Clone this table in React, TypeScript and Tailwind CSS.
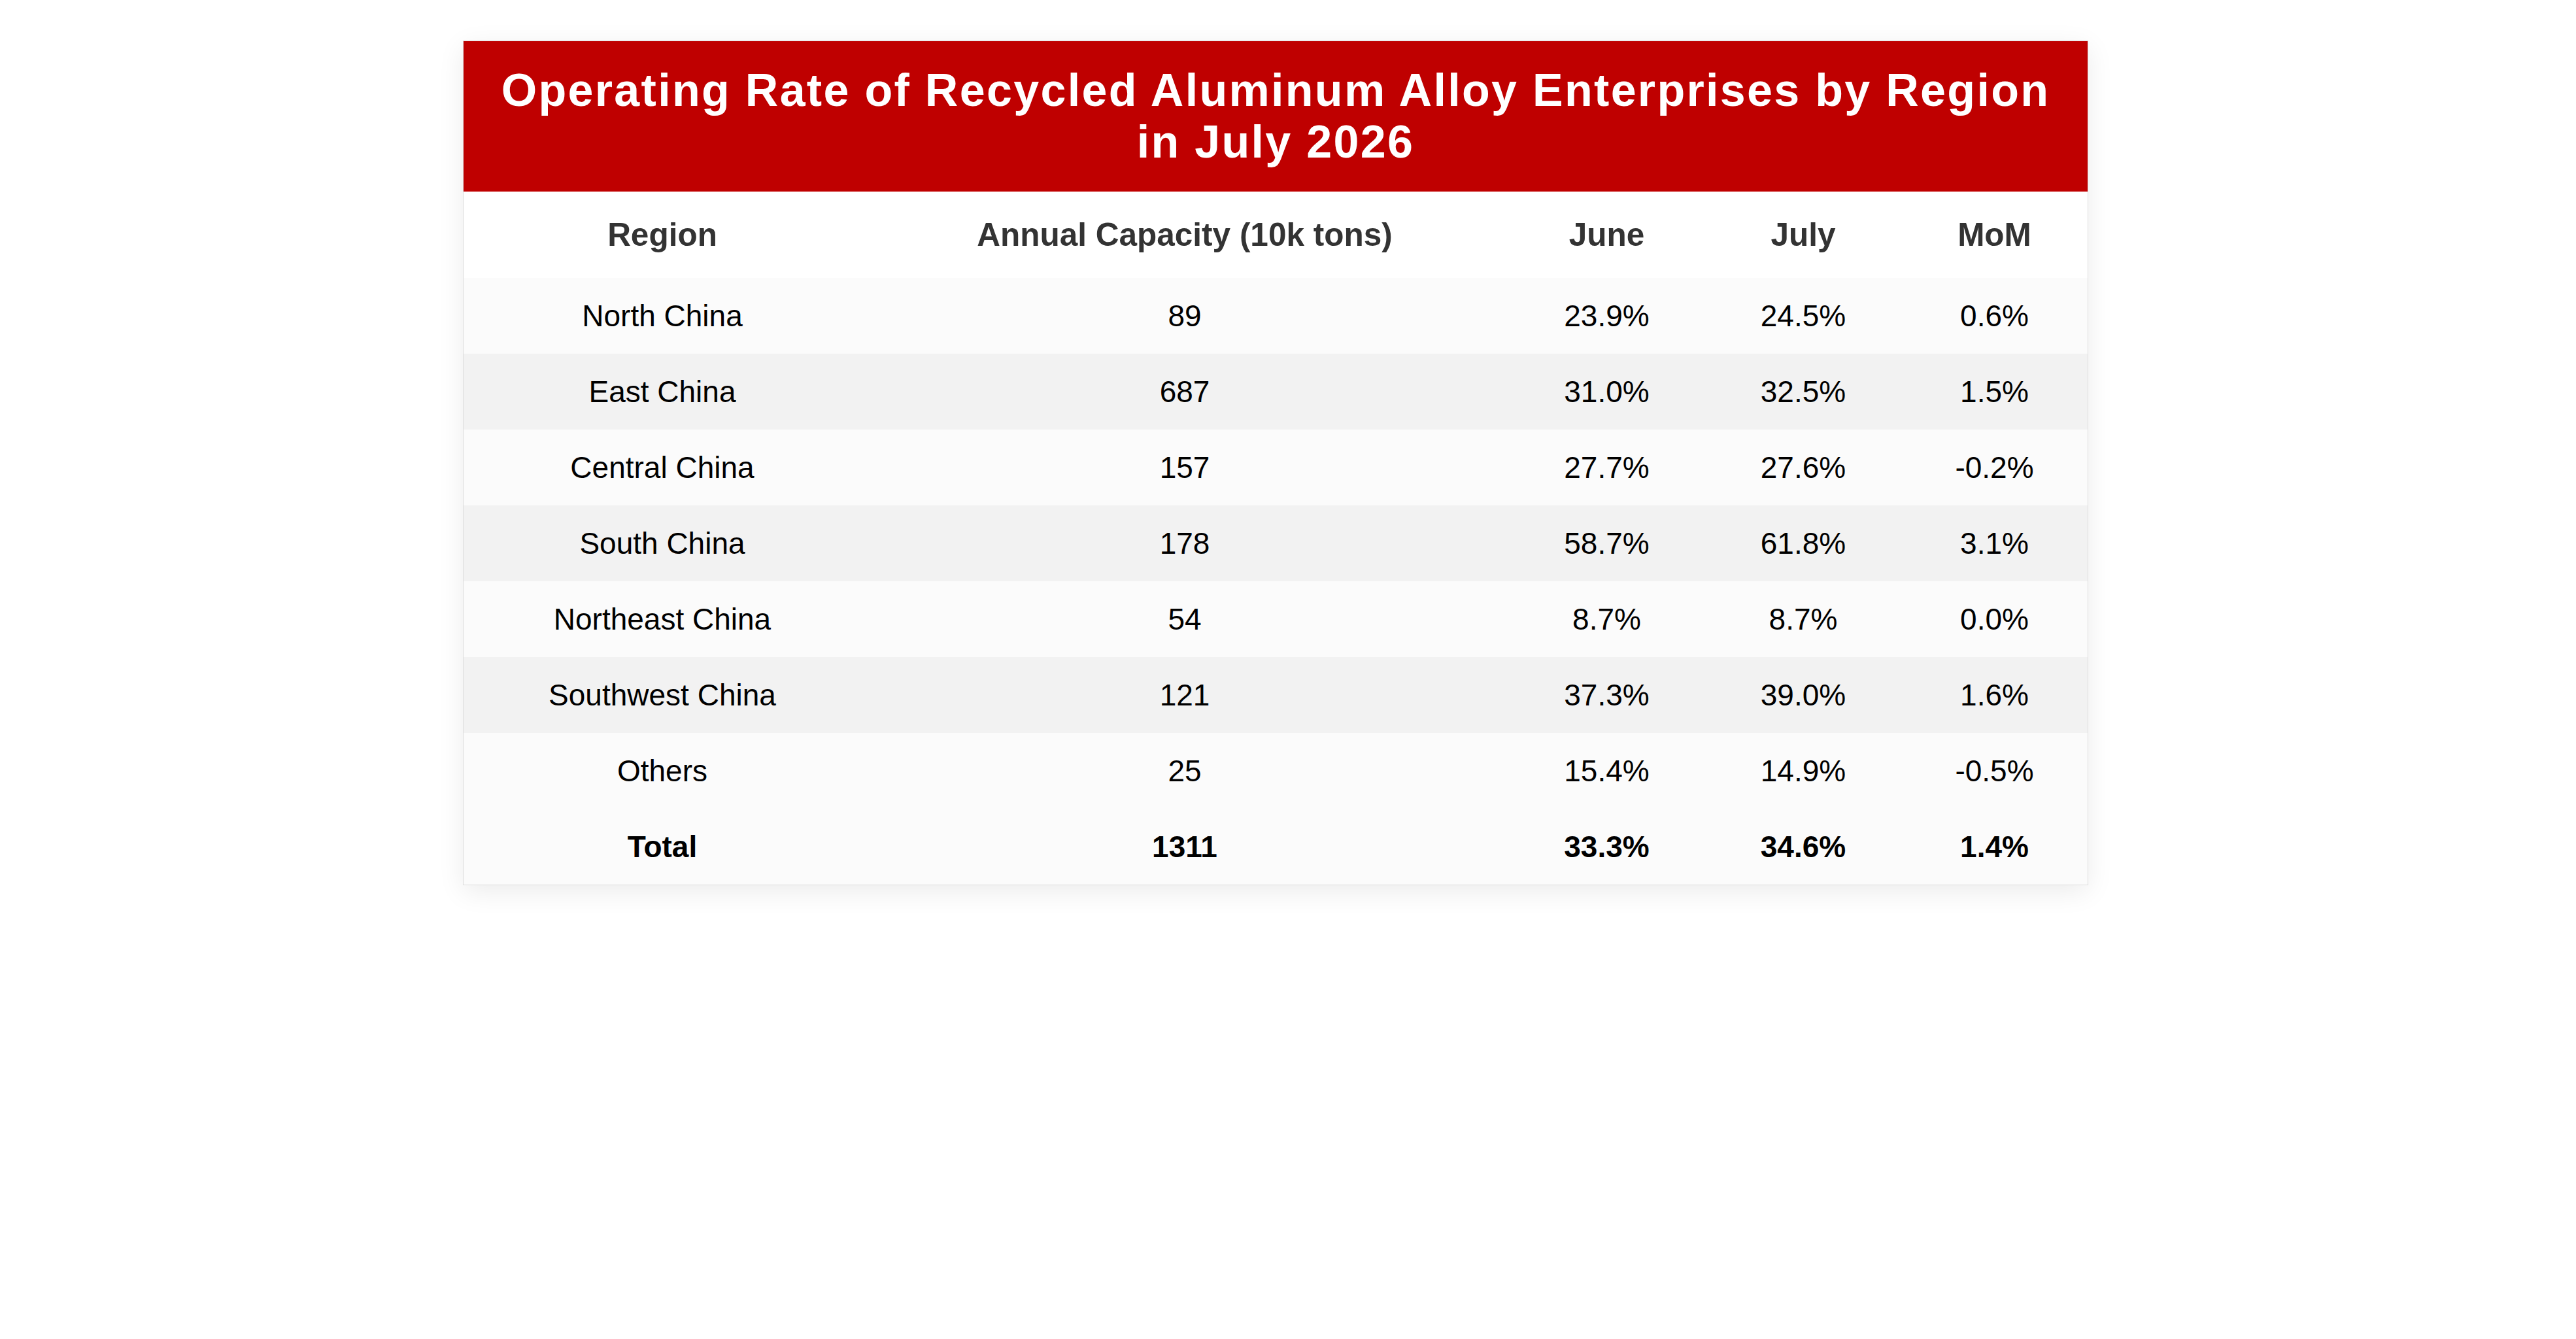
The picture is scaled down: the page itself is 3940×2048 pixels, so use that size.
import React from "react";

const rows = [
  { region: "North China", cap: "89", june: "23.9%", july: "24.5%", mom: "0.6%" },
  { region: "East China", cap: "687", june: "31.0%", july: "32.5%", mom: "1.5%" },
  { region: "Central China", cap: "157", june: "27.7%", july: "27.6%", mom: "-0.2%" },
  { region: "South China", cap: "178", june: "58.7%", july: "61.8%", mom: "3.1%" },
  { region: "Northeast China", cap: "54", june: "8.7%", july: "8.7%", mom: "0.0%" },
  { region: "Southwest China", cap: "121", june: "37.3%", july: "39.0%", mom: "1.6%" },
  { region: "Others", cap: "25", june: "15.4%", july: "14.9%", mom: "-0.5%" },
];

const cols = "grid grid-cols-[608px_990px_301px_300px_285px]";

const App = () => {
  return (
    <div className="min-h-screen bg-white font-['Liberation_Sans',Arial,sans-serif] pt-[62px] pr-[38px] flex justify-center items-start">
      <div className="w-[2486px] border border-[#dddddd] bg-white shadow-[0_10px_38px_rgba(0,0,0,0.08)]">
        <div className="bg-[#bf0000] py-[36px] px-[20px]">
          <h1 className="text-center text-white font-bold text-[70px] leading-[79px] tracking-[2.3px] whitespace-nowrap">
            Operating Rate of Recycled Aluminum Alloy Enterprises by Region
            <br />
            in July 2026
          </h1>
        </div>

        <div className={`${cols} h-[132px] bg-white text-[#333333] font-bold text-[49.5px]`}>
          <div className="flex items-center justify-center">Region</div>
          <div className="flex items-center justify-center">Annual Capacity (10k tons)</div>
          <div className="flex items-center justify-center">June</div>
          <div className="flex items-center justify-center">July</div>
          <div className="flex items-center justify-center">MoM</div>
        </div>

        {rows.map((r, i) => (
          <div
            key={r.region}
            className={`${cols} h-[116px] text-black text-[46px] ${i % 2 === 0 ? "bg-[#fbfbfb]" : "bg-[#f2f2f2]"}`}
          >
            <div className="flex items-center justify-center">{r.region}</div>
            <div className="flex items-center justify-center">{r.cap}</div>
            <div className="flex items-center justify-center">{r.june}</div>
            <div className="flex items-center justify-center">{r.july}</div>
            <div className="flex items-center justify-center">{r.mom}</div>
          </div>
        ))}

        <div className={`${cols} h-[116px] text-black font-bold text-[46px] bg-[#fbfbfb]`}>
          <div className="flex items-center justify-center">Total</div>
          <div className="flex items-center justify-center">1311</div>
          <div className="flex items-center justify-center">33.3%</div>
          <div className="flex items-center justify-center">34.6%</div>
          <div className="flex items-center justify-center">1.4%</div>
        </div>
      </div>
    </div>
  );
};

export default App;
